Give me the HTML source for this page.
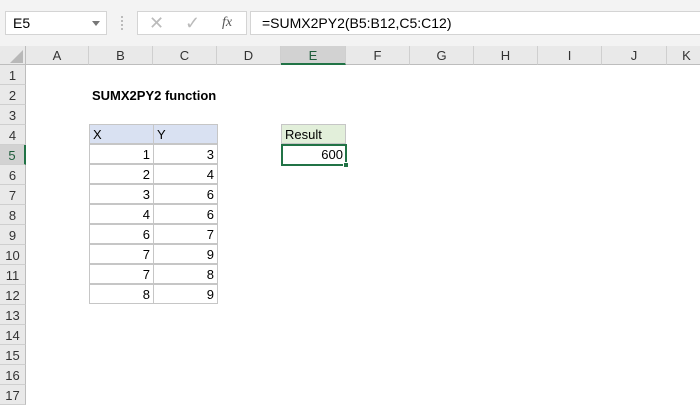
<!DOCTYPE html><html><head><style>
body{margin:0;width:700px;height:400px;overflow:hidden;background:#fff;font-family:"Liberation Sans",Calibri,sans-serif;position:relative}
.a{position:absolute;box-sizing:border-box}
.top{left:0;top:0;width:700px;height:46px;background:#f3f3f3}
.ch{top:46px;height:19px;background:#e9e9e9;border-right:1px solid #cfcfcf;border-bottom:1px solid #bdbdbd;font-size:13px;color:#333;text-align:center;line-height:19px}
.rh{left:0;width:26px;height:20px;background:#e9e9e9;border-bottom:1px solid #cfcfcf;border-right:1px solid #bdbdbd;font-size:13px;color:#333;text-align:center;line-height:21px}
.c{height:20px;font-size:13px;line-height:20px;padding:0 3px;border:1px solid #c6c6c6;margin:-1px 0 0 -1px;color:#000}
.r{text-align:right}
</style></head><body>
<div class="a top"></div>
<div class="a" style="left:5px;top:11px;width:102px;height:24px;background:#fff;border:1px solid #d4d4d4;font-size:14px;line-height:22px;padding-left:7px">E5</div>
<div class="a" style="left:92px;top:21px;width:0;height:0;border-left:4px solid transparent;border-right:4px solid transparent;border-top:5px solid #777"></div>
<div class="a" style="left:121px;top:16px;width:2px;height:14px;border-left:2px dotted #bbb"></div>
<div class="a" style="left:137px;top:11px;width:110px;height:24px;background:#fff;border:1px solid #d4d4d4"></div>
<div class="a" style="left:149px;top:11px;font-size:18px;color:#bbb;line-height:24px">✕</div>
<div class="a" style="left:185px;top:11px;font-size:18px;color:#bbb;line-height:24px">✓</div>
<div class="a" style="left:222px;top:11px;font-size:14px;color:#555;line-height:24px;font-style:italic;font-family:'Liberation Serif',serif">fx</div>
<div class="a" style="left:250px;top:11px;width:460px;height:24px;background:#fff;border:1px solid #d4d4d4;font-size:14px;line-height:22px;padding-left:11px">=SUMX2PY2(B5:B12,C5:C12)</div>
<div class="a" style="left:0;top:46px;width:26px;height:19px;background:#e9e9e9;border-right:1px solid #bdbdbd;border-bottom:1px solid #bdbdbd"></div>
<div class="a" style="left:10px;top:50px;width:0;height:0;border-left:13px solid transparent;border-bottom:13px solid #b8b8b8"></div>
<div class="a ch" style="left:26px;width:63px">A</div>
<div class="a ch" style="left:89px;width:64px">B</div>
<div class="a ch" style="left:153px;width:64px">C</div>
<div class="a ch" style="left:217px;width:64px">D</div>
<div class="a ch" style="left:281px;width:65px;background:#d2d2d2;border-bottom:2px solid #217346;color:#1e5c3a">E</div>
<div class="a ch" style="left:346px;width:64px">F</div>
<div class="a ch" style="left:410px;width:64px">G</div>
<div class="a ch" style="left:474px;width:64px">H</div>
<div class="a ch" style="left:538px;width:64px">I</div>
<div class="a ch" style="left:602px;width:65px">J</div>
<div class="a ch" style="left:667px;width:40px">K</div>
<div class="a rh" style="top:65px">1</div><div class="a rh" style="top:85px">2</div><div class="a rh" style="top:105px">3</div><div class="a rh" style="top:125px">4</div>
<div class="a rh" style="top:145px;background:#d2d2d2;border-right:2px solid #217346;color:#1e5c3a">5</div>
<div class="a rh" style="top:165px">6</div><div class="a rh" style="top:185px">7</div><div class="a rh" style="top:205px">8</div><div class="a rh" style="top:225px">9</div><div class="a rh" style="top:245px">10</div><div class="a rh" style="top:265px">11</div><div class="a rh" style="top:285px">12</div><div class="a rh" style="top:305px">13</div><div class="a rh" style="top:325px">14</div><div class="a rh" style="top:345px">15</div><div class="a rh" style="top:365px">16</div><div class="a rh" style="top:385px">17</div>
<div class="a" style="left:92px;top:86px;font-size:13px;font-weight:bold;line-height:20px">SUMX2PY2 function</div>
<div class="a c" style="left:90px;top:125px;width:65px;background:#d9e1f2">X</div>
<div class="a c" style="left:154px;top:125px;width:65px;background:#d9e1f2">Y</div>
<div class="a c r" style="left:90px;top:145px;width:65px">1</div><div class="a c r" style="left:154px;top:145px;width:65px">3</div>
<div class="a c r" style="left:90px;top:165px;width:65px">2</div><div class="a c r" style="left:154px;top:165px;width:65px">4</div>
<div class="a c r" style="left:90px;top:185px;width:65px">3</div><div class="a c r" style="left:154px;top:185px;width:65px">6</div>
<div class="a c r" style="left:90px;top:205px;width:65px">4</div><div class="a c r" style="left:154px;top:205px;width:65px">6</div>
<div class="a c r" style="left:90px;top:225px;width:65px">6</div><div class="a c r" style="left:154px;top:225px;width:65px">7</div>
<div class="a c r" style="left:90px;top:245px;width:65px">7</div><div class="a c r" style="left:154px;top:245px;width:65px">9</div>
<div class="a c r" style="left:90px;top:265px;width:65px">7</div><div class="a c r" style="left:154px;top:265px;width:65px">8</div>
<div class="a c r" style="left:90px;top:285px;width:65px">8</div><div class="a c r" style="left:154px;top:285px;width:65px">9</div>
<div class="a c" style="left:282px;top:125px;width:65px;background:#e2efda">Result</div>
<div class="a" style="left:281px;top:144px;width:66px;height:22px;border:2px solid #217346;font-size:13px;text-align:right;line-height:18px;padding-right:2px">600</div>
<div class="a" style="left:343px;top:162px;width:6px;height:6px;background:#217346;border:1px solid #fff"></div>
</body></html>
